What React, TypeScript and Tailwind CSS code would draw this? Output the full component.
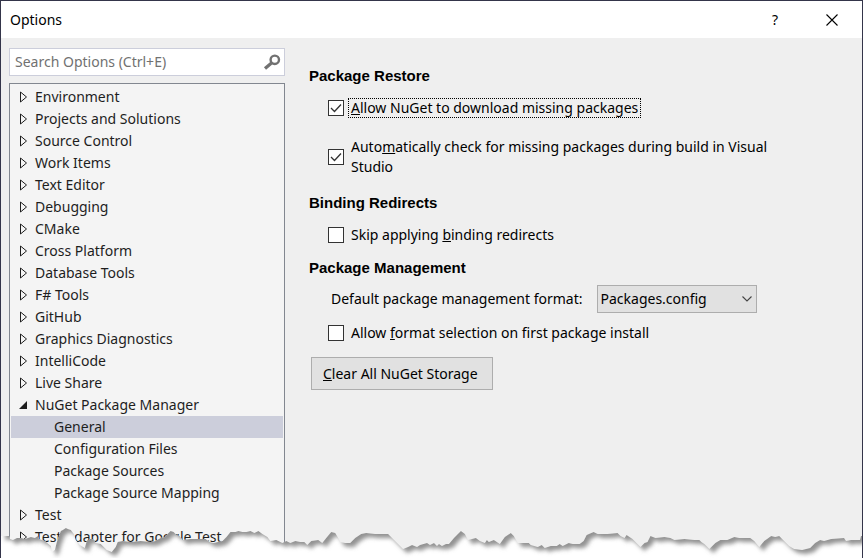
import { useState, type ReactNode } from "react";

const categories = [
  "Environment",
  "Projects and Solutions",
  "Source Control",
  "Work Items",
  "Text Editor",
  "Debugging",
  "CMake",
  "Cross Platform",
  "Database Tools",
  "F# Tools",
  "GitHub",
  "Graphics Diagnostics",
  "IntelliCode",
  "Live Share",
  "NuGet Package Manager",
  "Test",
  "Test Adapter for Google Test",
];

const nugetPages = ["General", "Configuration Files", "Package Sources", "Package Source Mapping"];

// Lower contour of the dialog, left to right.
const contour =
  "0,26 8,26 9,29 12,30 16,28 20,28 24,29 30,27 34,28 37,26 38,29 44,31 50,36 51,42 54,40 56,32 60,21 62,20 65,18 67,19 70,20 73,24 75,30 79,35 84,38 86,31 89,29 92,29 95,33 100,34 106,40 111,42 115,37 117,32 122,31 130,32 140,31 150,32 155,31 160,28 164,27 170,21 173,22 176,25 179,26 182,30 190,29 198,29 205,29 209,32 213,33 222,31 226,27 230,22 235,22 238,21 242,22 246,22 250,21 254,23 258,21 262,24 267,27 270,31 276,30 282,33 286,31 290,33 295,31 300,32 304,32 307,35 311,31 318,30 322,33 326,28 331,22 335,23 338,28 340,32 345,33 350,33 355,28 361,24 366,23 375,24 388,24 392,28 398,34 403,39 408,37 412,35 417,37 420,35 427,33 430,35 434,33 437,36 439,34 442,36 446,34 449,34 454,28 461,21 465,24 468,30 476,28 480,31 485,33 487,30 489,32 494,30 500,34 505,27 511,23 514,26 518,33 524,33 529,33 531,35 538,37 542,35 545,38 551,36 557,36 560,34 563,36 569,33 573,34 580,34 584,31 587,25 594,22 598,24 608,24 618,23 621,26 625,28 627,25 633,29 641,37 645,33 648,32 651,26 656,28 665,27 671,28 675,30 685,29 695,30 700,30 702,32 705,34 710,39 716,33 721,30 728,30 735,27 740,28 751,28 755,31 760,37 765,31 772,26 776,27 780,26 785,31 790,36 795,39 803,40 811,38 816,33 821,30 825,31 832,29 845,28 847,31 852,30 861,30 862,26 863,26";

function TornEdge() {
  return (
    <svg
      aria-hidden="true"
      viewBox="0 0 863 48"
      preserveAspectRatio="none"
      className="pointer-events-none absolute inset-x-0 bottom-0 h-12 w-full"
    >
      <defs>
        <clipPath id="below">
          <polygon points={`${contour} 863,48 0,48`} shapeRendering="crispEdges" />
        </clipPath>
        <filter id="soft" x="-5%" y="-50%" width="110%" height="200%">
          <feGaussianBlur stdDeviation="2" />
        </filter>
      </defs>
      <g clipPath="url(#below)">
        <rect width="863" height="48" fill="#ffffff" />
        <polygon
          points={`4,-30 ${contour} 900,26 900,-30`}
          transform="translate(4 4)"
          fill="#929292"
          filter="url(#soft)"
        />
      </g>
    </svg>
  );
}

function Arrow({ open }: { open: boolean }) {
  return (
    <svg aria-hidden="true" viewBox="0 0 10 12" className="h-3 w-[10px] shrink-0">
      {open ? (
        <path d="M9 2v8H1z" fill="#1e1e1e" />
      ) : (
        <path d="M2.5 1v10L8.500 6z" fill="none" stroke="#1e1e1e" strokeWidth="1" />
      )}
    </svg>
  );
}

function Check({
  id,
  defaultChecked = false,
  focused = false,
  children,
}: {
  id: string;
  defaultChecked?: boolean;
  focused?: boolean;
  children: ReactNode;
}) {
  return (
    <div className="flex items-center gap-1 pl-[19px]">
      <span className="grid shrink-0">
        <input
          id={id}
          type="checkbox"
          defaultChecked={defaultChecked}
          className="peer col-start-1 row-start-1 size-4 appearance-none border border-[#333333] bg-white outline-none"
        />
        <svg
          aria-hidden="true"
          viewBox="0 0 16 16"
          className="pointer-events-none invisible col-start-1 row-start-1 size-4 peer-checked:visible"
        >
          <path d="M3 8l3.5 3.5L13 4.5" fill="none" stroke="#333333" strokeWidth="1.3" />
        </svg>
      </span>
      <label
        htmlFor={id}
        className={`px-[3px] leading-5 ${focused ? "outline-1 -outline-offset-1 outline-black outline-dotted" : ""}`}
      >
        {children}
      </label>
    </div>
  );
}

function Heading({ children }: { children: ReactNode }) {
  return (
    <h2 className="font-['Liberation_Sans',Arial,sans-serif] text-[15px] leading-5 font-bold text-black">{children}</h2>
  );
}

export default function App() {
  const [page, setPage] = useState("General");
  const [expanded, setExpanded] = useState(true);

  return (
    <div className="relative overflow-hidden border-x border-t border-[#34354a] bg-[#efefef] font-['Noto_Sans','Segoe_UI',sans-serif] text-sm text-black">
      <header className="flex h-[37px] items-center justify-between bg-white pr-[22px] pl-[9px]">
        <h1>Options</h1>
        <div className="flex items-center gap-[41px]">
          <button type="button" aria-label="Help" className="w-4 text-center">
            ?
          </button>
          <button type="button" aria-label="Close">
            <svg aria-hidden="true" viewBox="0 0 16 16" className="size-4">
              <path d="M2.5 2.5l11 11M13.5 2.5l-11 11" stroke="#000000" strokeWidth="1.1" />
            </svg>
          </button>
        </div>
      </header>

      <div className="flex items-stretch gap-6 pr-[75px] pl-2">
        <div className="flex w-[276px] shrink-0 flex-col gap-[7px] pt-[10px]">
          <div className="flex h-7 items-center border border-[#cccedb] bg-white pr-[3px] pl-[5px]">
            <input
              type="search"
              aria-label="Search Options"
              placeholder="Search Options (Ctrl+E)"
              className="min-w-0 flex-1 bg-transparent outline-none placeholder:text-[#717171]"
            />
            <svg aria-hidden="true" viewBox="0 0 18 18" className="size-[18px] shrink-0">
              <circle cx="11.8" cy="6.8" r="4.2" fill="none" stroke="#717171" strokeWidth="2.4" />
              <path d="M8.500 10l-6.500 5.500" stroke="#717171" strokeWidth="3.2" />
            </svg>
          </div>

          <ul className="border-x border-t border-[#828790] bg-[#f4f4f4] px-px pt-[2px] pb-[10px] text-[#1e1e1e]">
            {categories.map((name) => {
              const isNuget = name === "NuGet Package Manager";
              return (
                <li key={name}>
                  <button
                    type="button"
                    aria-expanded={isNuget && expanded}
                    onClick={() => isNuget && setExpanded(!expanded)}
                    className="flex h-[22px] w-full items-center gap-[7px] pl-[7px] text-left"
                  >
                    <Arrow open={isNuget && expanded} />
                    {name}
                  </button>
                  {isNuget && expanded && (
                    <ul>
                      {nugetPages.map((item) => (
                        <li key={item}>
                          <button
                            type="button"
                            onClick={() => setPage(item)}
                            className={`flex h-[22px] w-full items-center pl-[43px] text-left ${item === page ? "bg-[#cccedb]" : ""}`}
                          >
                            {item}
                          </button>
                        </li>
                      ))}
                    </ul>
                  )}
                </li>
              );
            })}
          </ul>
        </div>

        <main className="min-w-0 flex-1 pt-7">
          <section>
            <Heading>Package Restore</Heading>
            <div className="mt-3 flex flex-col items-start gap-[19px]">
              <Check id="allow-download" defaultChecked focused>
                <u>A</u>llow NuGet to download missing packages
              </Check>
              <Check id="auto-check" defaultChecked>
                Auto<u>m</u>atically check for missing packages during build in Visual Studio
              </Check>
            </div>
          </section>

          <section className="mt-4">
            <Heading>Binding Redirects</Heading>
            <div className="mt-3">
              <Check id="skip-binding">
                Skip applying <u>b</u>inding redirects
              </Check>
            </div>
          </section>

          <section className="mt-[13px]">
            <Heading>Package Management</Heading>
            <div className="mt-[7px] flex items-center gap-[14px] pl-[22px]">
              <label htmlFor="format">Default package management format:</label>
              <span className="grid w-40 items-center">
                <select
                  id="format"
                  defaultValue="Packages.config"
                  className="col-start-1 row-start-1 h-7 appearance-none border border-[#adadad] bg-[#e1e1e1] pl-[3px] outline-none"
                >
                  <option>Packages.config</option>
                  <option>PackageReference</option>
                </select>
                <svg
                  aria-hidden="true"
                  viewBox="0 0 10 6"
                  className="pointer-events-none col-start-1 row-start-1 mr-[5px] h-[6px] w-[10px] justify-self-end"
                >
                  <path d="M0.500 0.500L5 5l4.500-4.500" fill="none" stroke="#444444" strokeWidth="1.1" />
                </svg>
              </span>
            </div>
            <div className="mt-[10px]">
              <Check id="allow-format">
                Allow <u>f</u>ormat selection on first package install
              </Check>
            </div>
            <button
              type="button"
              className="mt-[14px] ml-[2px] h-[33px] min-w-[182px] border border-[#adadad] bg-[#e1e1e1] px-[11px] text-left"
            >
              <u>C</u>lear All NuGet Storage
            </button>
          </section>
        </main>
      </div>

      <TornEdge />
    </div>
  );
}
